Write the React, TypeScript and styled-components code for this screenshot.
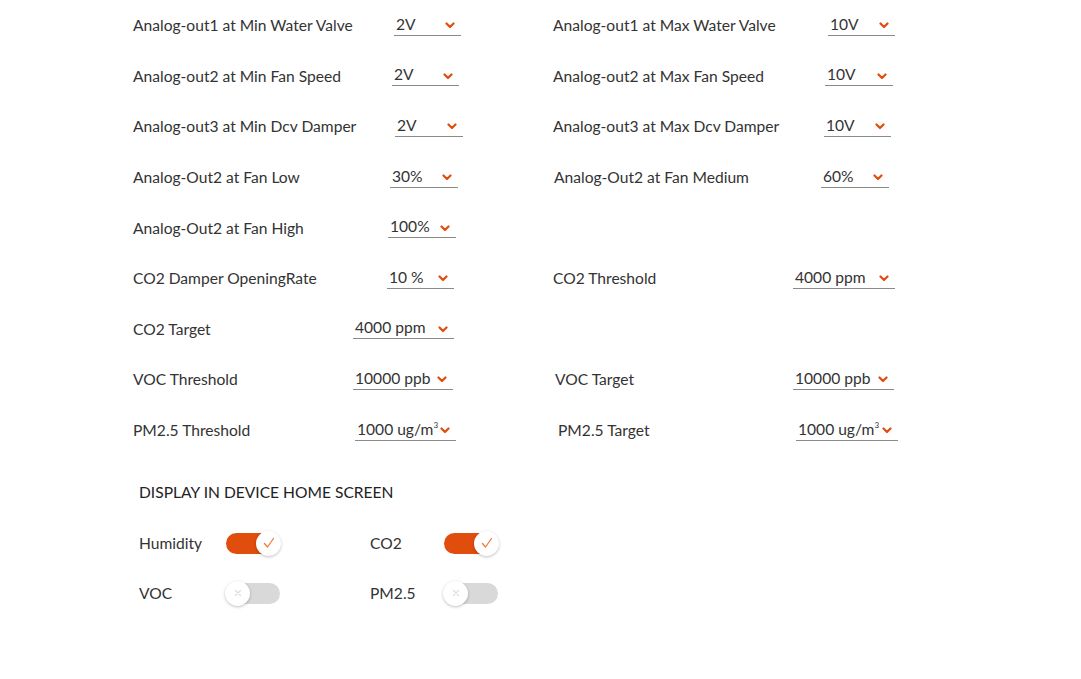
import React from 'react';
import styled, { createGlobalStyle } from 'styled-components';

const ORANGE = '#e14d0d';

const GlobalStyle = createGlobalStyle`
  body {
    margin: 0;
    background: #ffffff;
    font-family: 'Lato', 'Open Sans', sans-serif;
    color: #333333;
  }
`;

interface ISetting {
  label: string
  value: string
  unit3?: boolean
  width: number
  shift?: number
  indent?: number
}

type Row = [ISetting, ISetting | null];

const rows: Row[] = [
  [
    { label: 'Analog-out1 at Min Water Valve', value: '2V', width: 67, shift: -4 },
    { label: 'Analog-out1 at Max Water Valve', value: '10V', width: 67, shift: -2 },
  ],
  [
    { label: 'Analog-out2 at Min Fan Speed', value: '2V', width: 67, shift: -2 },
    { label: 'Analog-out2 at Max Fan Speed', value: '10V', width: 68, shift: 0 },
  ],
  [
    { label: 'Analog-out3 at Min Dcv Damper', value: '2V', width: 68, shift: -6 },
    { label: 'Analog-out3 at Max Dcv Damper', value: '10V', width: 67, shift: 2 },
  ],
  [
    { label: 'Analog-Out2 at Fan Low', value: '30%', width: 68, shift: -1 },
    { label: 'Analog-Out2 at Fan Medium', value: '60%', width: 68, shift: 4, indent: 1 },
  ],
  [
    { label: 'Analog-Out2 at Fan High', value: '100%', width: 68, shift: 1 },
    null,
  ],
  [
    { label: 'CO2 Damper OpeningRate', value: '10 %', width: 67, shift: 3 },
    { label: 'CO2 Threshold', value: '4000 ppm', width: 102, shift: -2 },
  ],
  [
    { label: 'CO2 Target', value: '4000 ppm', width: 101, shift: 3 },
    null,
  ],
  [
    { label: 'VOC Threshold', value: '10000 ppb', width: 100, shift: 4 },
    { label: 'VOC Target', value: '10000 ppb', width: 101, shift: -1, indent: 2 },
  ],
  [
    { label: 'PM2.5 Threshold', value: '1000 ug/m', unit3: true, width: 101, shift: 1 },
    { label: 'PM2.5 Target', value: '1000 ug/m', unit3: true, width: 102, shift: -5, indent: 5 },
  ],
];

const toggles = [
  { label: 'Humidity', on: true },
  { label: 'CO2', on: true },
  { label: 'VOC', on: false },
  { label: 'PM2.5', on: false },
];

const Page = styled.div`
  padding: 0 0 0 133px;
  width: 1081px;
  height: 679px;
  box-sizing: border-box;
  overflow: hidden;
`;

const SettingsGrid = styled.div`
  display: grid;
  grid-template-columns: 324px 340px;
  column-gap: 96px;
  grid-auto-rows: 50.6px;
`;

const Field = styled.div<{ $indent?: number }>`
  display: flex;
  align-items: center;
  justify-content: space-between;
  padding-left: ${p => p.$indent || 0}px;
`;

const Label = styled.span`
  font-size: 15.6px;
  color: #333333;
  white-space: nowrap;
`;

const Select = styled.div<{ $width: number, $shift: number }>`
  display: flex;
  align-items: center;
  justify-content: space-between;
  box-sizing: border-box;
  width: ${p => p.$width}px;
  height: 22px;
  margin-top: -1px;
  margin-right: ${p => p.$shift}px;
  padding: 0 6px 1px 2px;
  border-bottom: 1px solid #8a8a8a;
`;

const Value = styled.span`
  font-size: 15.6px;
  color: #333333;
  white-space: nowrap;
`;

const Sup = styled.sup`
  font-size: 8px;
  vertical-align: 7px;
  line-height: 0;
`;

const Chevron = styled.svg`
  width: 10px;
  height: 7px;
  margin-top: 4px;
  flex-shrink: 0;
`;

const DisplaySection = styled.section`
  margin-top: 23px;
  padding-left: 6px;
`;

const SectionTitle = styled.h3`
  margin: 0;
  font-size: 15.6px;
  font-weight: 400;
  color: #222222;
  line-height: 28px;
`;

const ToggleGrid = styled.div`
  display: grid;
  grid-template-columns: 231px 160px;
  grid-auto-rows: 50px;
  margin-top: 12px;
`;

const ToggleField = styled.div`
  display: grid;
  grid-template-columns: 87px auto;
  align-items: center;
  justify-content: start;

  &:nth-child(even) {
    grid-template-columns: 74px auto;
  }
`;

const Track = styled.div<{ $on: boolean }>`
  position: relative;
  width: 54px;
  height: 21px;
  border-radius: 11px;
  background: ${p => (p.$on ? ORANGE : '#d9d9d9')};
`;

const Knob = styled.div<{ $on: boolean }>`
  position: absolute;
  top: -2px;
  ${p => (p.$on ? 'right: -1px;' : 'left: -1px;')}
  width: 25px;
  height: 25px;
  border-radius: 50%;
  background: #ffffff;
  box-shadow: 0 1px 3px rgba(0, 0, 0, 0.25);
  display: flex;
  align-items: center;
  justify-content: center;
`;

const Dropdown = ({ s }: { s: ISetting }) => (
  <Select $width={s.width} $shift={s.shift || 0}>
    <Value>{s.value}{s.unit3 && <Sup>3</Sup>}</Value>
    <Chevron viewBox="0 0 10 7">
      <polyline points="1.5,1.5 5,5 8.5,1.5" fill="none" stroke={ORANGE} strokeWidth="2.2" strokeLinecap="round" strokeLinejoin="round" />
    </Chevron>
  </Select>
);

const Toggle = ({ on }: { on: boolean }) => (
  <Track $on={on}>
    <Knob $on={on}>
      {on ? (
        <svg width="14" height="14" viewBox="0 0 14 14">
          <polyline points="2.5,7.5 5.5,11 11.5,2.5" fill="none" stroke="#ef7a3c" strokeWidth="1.3" strokeLinecap="round" strokeLinejoin="round" />
        </svg>
      ) : (
        <svg width="10" height="10" viewBox="0 0 10 10">
          <path d="M2.5 2.5 L7.5 7.5 M7.5 2.5 L2.5 7.5" stroke="#dddddd" strokeWidth="1.2" strokeLinecap="round" />
        </svg>
      )}
    </Knob>
  </Track>
);

const App: React.FC = () => (
  <Page>
    <GlobalStyle />
    <SettingsGrid>
      {rows.map((row, i) => (
        <React.Fragment key={i}>
          {row.map((s, j) => s ? (
            <Field key={j} $indent={s.indent}>
              <Label>{s.label}</Label>
              <Dropdown s={s} />
            </Field>
          ) : <div key={j} />)}
        </React.Fragment>
      ))}
    </SettingsGrid>
    <DisplaySection>
      <SectionTitle>DISPLAY IN DEVICE HOME SCREEN</SectionTitle>
      <ToggleGrid>
        {toggles.map(t => (
          <ToggleField key={t.label}>
            <Label>{t.label}</Label>
            <Toggle on={t.on} />
          </ToggleField>
        ))}
      </ToggleGrid>
    </DisplaySection>
  </Page>
);

export default App;
